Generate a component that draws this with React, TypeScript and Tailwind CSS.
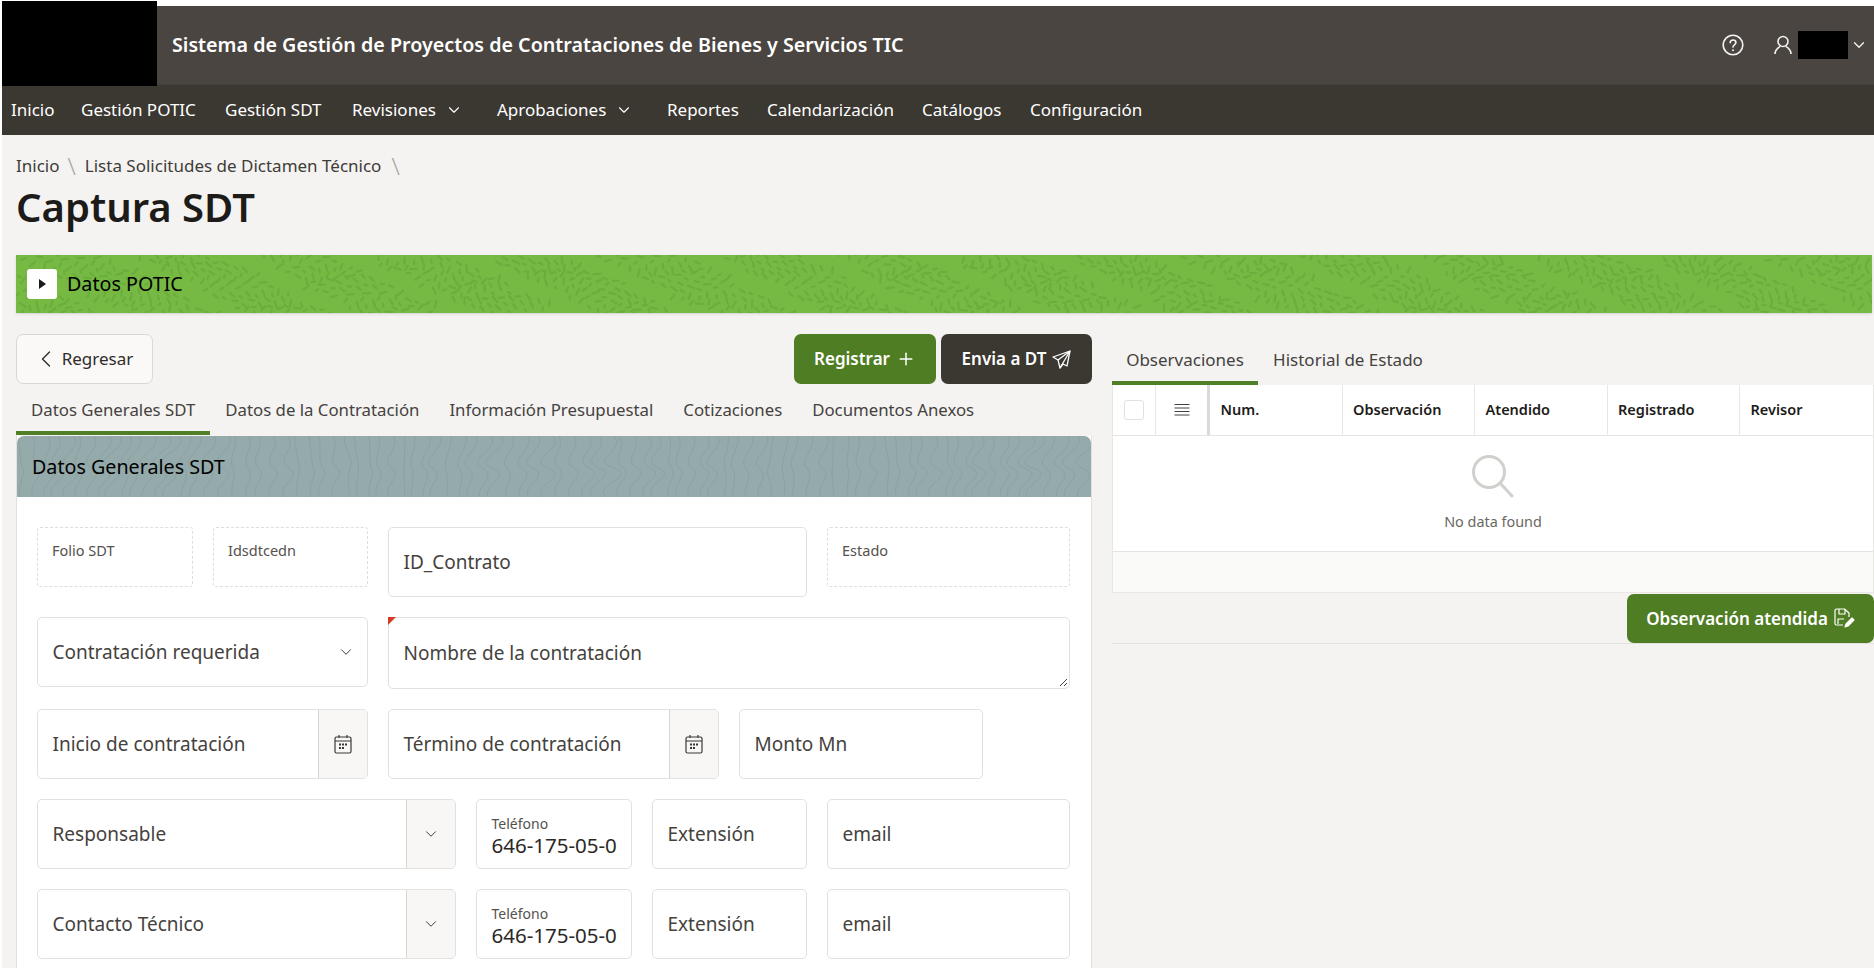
import { ChevronDown, ChevronLeft, Plus } from "lucide-react";

const font = "font-['Noto_Sans',sans-serif]";

// deterministic scatter of short dashes for the green banner texture
const dashes = Array.from({ length: 1300 }, (_, i) => {
  const x = (i * 73.13) % 1860;
  const y = (i * 37.71) % 60;
  const zone = Math.sin(x / 45) + Math.cos(y / 11 + x / 90);
  const a = zone * 1.7 + ((i * 13) % 7) / 6;
  const len = 3 + ((i * 7) % 5);
  return {
    x1: x,
    y1: y,
    x2: x + Math.cos(a) * len,
    y2: y + Math.sin(a) * len,
  };
});

const GreenTexture = () => (
  <svg className="absolute inset-0 h-full w-full" aria-hidden="true">
    {dashes.map((d, i) => (
      <line key={i} x1={d.x1} y1={d.y1} x2={d.x2} y2={d.y2} stroke="#6bae3e" strokeWidth="2.2" strokeLinecap="round" />
    ))}
  </svg>
);

const contours = Array.from({ length: 90 }, (_, i) => {
  const x = i * 12 + ((i * 7) % 5);
  const s = 4 + ((i * 11) % 9) * 2 + 8 * Math.sin(i / 6);
  const t = 6 * Math.cos(i / 4);
  return `M${x} -4 C${x + s} 12 ${x - s + t} 22 ${x + t} 32 S${x - s} 50 ${x + t} 66`;
});

const ContourTexture = () => (
  <svg className="absolute inset-0 h-full w-full" aria-hidden="true">
    {contours.map((d, i) => (
      <path key={i} d={d} fill="none" stroke="#8ca2a2" strokeWidth="1" />
    ))}
  </svg>
);

const CalendarIcon = () => (
  <svg width="18" height="20" viewBox="0 0 18 20" fill="none" stroke="#3b3834" strokeWidth="1.2">
    <rect x="1" y="3" width="16" height="16" rx="1.5" />
    <path d="M1 7h16M5 1v3M13 1v3" />
    <path d="M5 10.5h2M8 10.5h2M11 10.5h2M5 14h2M8 14h2" strokeWidth="2" />
  </svg>
);

const HelpIcon = () => (
  <svg width="22" height="22" viewBox="0 0 22 22" fill="none" stroke="#f3f2ef" strokeWidth="1.6" strokeLinecap="round">
    <circle cx="11" cy="11" r="9.8" />
    <path d="M8.2 8.8c0-1.7 1.2-2.8 2.9-2.8s2.8 1 2.8 2.5c0 2.3-2.9 2.4-2.9 4.6" />
    <path d="M11 16.2v.1" strokeWidth="2" />
  </svg>
);

const UserIcon = () => (
  <svg width="18" height="20" viewBox="0 0 18 20" fill="none" stroke="#f3f2ef" strokeWidth="1.6">
    <circle cx="9" cy="6.5" r="5" />
    <path d="M1 19c0-3.5 2.5-6 5.2-7.6M17 19c0-3.500-2.500-6-5.200-7.600" />
  </svg>
);

const PlaneIcon = () => (
  <svg width="19" height="19" viewBox="0 0 19 19" fill="none" stroke="#fff" strokeWidth="1.3" strokeLinejoin="round">
    <path d="M18 1 1 7l5 3 2 8 3-4 4 2z" />
    <path d="M18 1 6 10M18 1 8 18" />
  </svg>
);

const SaveEditIcon = () => (
  <svg width="21" height="21" viewBox="0 0 21 21" fill="none" stroke="#fff" strokeWidth="1.2" strokeLinejoin="round">
    <path d="M9 17H2.500A1.500 1.500 0 0 1 1 15.500v-13A1.500 1.500 0 0 1 2.500 1h8L15 5v4" />
    <path d="M5 1v5h6V1M4 16v-5h6" />
    <path d="m11 19 1-3 6-6 2 2-6 6z" fill="#fff" />
  </svg>
);

const MenuLinesIcon = () => (
  <svg width="16" height="14" viewBox="0 0 16 14" fill="none" stroke="#45423e" strokeWidth="1">
    <path d="M.5 1.500h15M.5 5h15M.5 8.500h15M.5 12h15" />
  </svg>
);

const navItems = [
  { label: "Inicio", w: "w-[70px]" },
  { label: "Gestión POTIC", w: "w-[144px]" },
  { label: "Gestión SDT", w: "w-[127px]" },
  { label: "Revisiones", w: "w-[145px]", caret: true },
  { label: "Aprobaciones", w: "w-[170px]", caret: true },
  { label: "Reportes", w: "w-[100px]" },
  { label: "Calendarización", w: "w-[155px]" },
  { label: "Catálogos", w: "w-[108px]" },
  { label: "Configuración", w: "w-[130px]" },
];

const tabs = ["Datos Generales SDT", "Datos de la Contratación", "Información Presupuestal", "Cotizaciones", "Documentos Anexos"];

const boxClass = "rounded-[5px] border border-[#e3e1dd] bg-white";
const inputText = "text-[19px] text-[#45423e]";

const Field = ({ label, className }: { label: string; className: string }) => (
  <div className={`${boxClass} ${inputText} flex h-[70px] items-center px-[14.500px] ${className}`}>{label}</div>
);

const ReadOnly = ({ label, className }: { label: string; className: string }) => (
  <div className={`h-[60px] rounded-[3px] border border-dashed border-[#e0deda] bg-white px-[14px] pt-[12px] text-[14.500px] text-[#55514c] ${className}`}>
    {label}
  </div>
);

const AddonField = ({ label, className, addon }: { label: string; className: string; addon: "cal" | "down" }) => (
  <div className={`${boxClass} flex h-[70px] overflow-hidden ${className}`}>
    <div className={`${inputText} flex flex-1 items-center px-[14.500px] whitespace-nowrap`}>{label}</div>
    <div className="flex w-[49px] items-center justify-center border-l border-[#d9d6d2] bg-[#f8f7f5]">
      {addon === "cal" ? <CalendarIcon /> : <ChevronDown size={18} strokeWidth={1.3} color="#3b3834" />}
    </div>
  </div>
);

const PhoneField = () => (
  <div className={`${boxClass} h-[70px] w-[156px] px-[14.500px] pt-[15px]`}>
    <div className="text-[14px] leading-[18px] text-[#55514c]">Teléfono</div>
    <div className="text-[20.500px] leading-[24px] whitespace-nowrap text-[#2b2926]">646-175-05-0</div>
  </div>
);

const ContactRow = ({ label }: { label: string }) => (
  <div className="flex gap-[20px]">
    <AddonField label={label} addon="down" className="w-[419px]" />
    <PhoneField />
    <Field label="Extensión" className="w-[155px]" />
    <Field label="email" className="w-[243px]" />
  </div>
);

const columns = ["Num.", "Observación", "Atendido", "Registrado", "Revisor"];

export default function App() {
  return (
    <div className={`${font} relative h-[968px] w-[1874px] overflow-hidden bg-white pt-[6px] pl-[2px]`}>
      {/* redacted logo */}
      <div className="absolute top-[1px] left-[2px] z-10 h-[85px] w-[155px] bg-black" />

      <header className="flex h-[79px] items-center justify-between border-b border-[#45403b] bg-[#4a4540] pr-[6px] pl-[170px]">
        <div className="text-[19.700px] font-semibold whitespace-nowrap text-white">
          Sistema de Gestión de Proyectos de Contrataciones de Bienes y Servicios TIC
        </div>
        <div className="flex items-center">
          <HelpIcon />
          <div className="ml-[30px]"><UserIcon /></div>
          <div className="ml-[6px] h-[28px] w-[50px] bg-black" />
          <ChevronDown size={18} strokeWidth={1.8} color="#f3f2ef" className="ml-[2px]" />
        </div>
      </header>

      <nav className="flex h-[50px] items-center bg-[#3b3731] pl-[9px] text-[17px] text-white">
        {navItems.map((item) => (
          <div key={item.label} className={`flex items-center whitespace-nowrap ${item.w}`}>
            {item.label}
            {item.caret && <ChevronDown size={18} strokeWidth={1.5} className="ml-[9px]" />}
          </div>
        ))}
      </nav>

      <main className="h-[833px] bg-[#f4f3f1] pl-[14px]">
        <div className="flex h-[50px] items-center pt-[11px] text-[17px] text-[#3f3c38]">
          <span>Inicio</span>
          <span className="mr-[9px] ml-[8px] text-[24px] font-light text-[#a9a6a1]">\</span>
          <span>Lista Solicitudes de Dictamen Técnico</span>
          <span className="ml-[10px] text-[24px] font-light text-[#a9a6a1]">\</span>
        </div>
        <h1 className="h-[70px] text-[40px] leading-[44px] font-semibold text-[#1d1b19]">Captura SDT</h1>

        <div className="relative mr-[2px] flex h-[58px] items-center overflow-hidden bg-[#76b943] pl-[11px] shadow-sm">
          <GreenTexture />
          <div className="relative flex h-[30px] w-[30px] items-center justify-center rounded-[3px] bg-white">
            <div className="h-0 w-0 border-y-[5px] border-l-[7px] border-y-transparent border-l-[#1d1b19]" />
          </div>
          <span className="relative ml-[10px] text-[19.700px] text-black">Datos POTIC</span>
        </div>

        <div className="mt-[21px] flex gap-[20px]">
          {/* left column */}
          <div className="w-[1076px] shrink-0">
            <div className="flex h-[50px] items-stretch justify-between">
              <button className="flex w-[137px] items-center justify-center gap-[2px] rounded-[7px] border border-[#dbd8d4] bg-[#faf9f8] pr-[4px] text-[17px] text-[#2f2c29]">
                <ChevronLeft size={28} strokeWidth={1.2} />
                Regresar
              </button>
              <div className="flex gap-[5px]">
                <button className="flex w-[142px] items-center justify-center gap-[6px] rounded-[7px] bg-[#4f7d23] text-[17px] font-semibold text-white">
                  Registrar
                  <Plus size={20} strokeWidth={1.8} />
                </button>
                <button className="flex w-[151px] items-center justify-center gap-[6px] rounded-[7px] bg-[#3b3731] text-[17px] font-semibold text-white">
                  Envia a DT
                  <PlaneIcon />
                </button>
              </div>
            </div>

            <div className="mt-[5px] flex h-[46px] text-[16.800px] text-[#45423e]">
              {tabs.map((tab, i) => (
                <div
                  key={tab}
                  className={`flex items-center px-[15px] whitespace-nowrap ${i === 0 ? "border-b-4 border-[#4f7f26]" : "pb-[4px]"}`}
                >
                  {tab}
                </div>
              ))}
            </div>

            <section className="mt-[1px] border-x border-[#e3e1dd] bg-white pb-[40px]">
              <div className="relative flex h-[61px] items-center overflow-hidden rounded-t-[7px] bg-[#95aaaa] pl-[15px]">
                <ContourTexture />
                <span className="relative text-[19.700px] text-black">Datos Generales SDT</span>
              </div>

              <div className="flex flex-col gap-[20px] px-[20px] pt-[30px]">
                <div className="flex h-[70px] items-start gap-[20px]">
                  <ReadOnly label="Folio SDT" className="w-[156px]" />
                  <ReadOnly label="Idsdtcedn" className="w-[155px]" />
                  <Field label="ID_Contrato" className="w-[419px]" />
                  <ReadOnly label="Estado" className="w-[243px]" />
                </div>

                <div className="flex items-start gap-[20px]">
                  <div className={`${boxClass} ${inputText} flex h-[70px] w-[331px] items-center justify-between pr-[12px] pl-[14.500px]`}>
                    Contratación requerida
                    <ChevronDown size={18} strokeWidth={1.3} color="#3b3834" />
                  </div>
                  <div className={`${boxClass} ${inputText} relative flex h-[72px] w-[682px] items-center px-[14.500px]`}>
                    Nombre de la contratación
                    <div className="absolute -top-px -left-px h-0 w-0 border-t-[8px] border-r-[8px] border-t-[#d63b25] border-r-transparent" />
                    <svg className="absolute right-[1px] bottom-[1px]" width="10" height="10" viewBox="0 0 10 10" stroke="#45423e" strokeWidth="1">
                      <path d="M9 2 2 9M9 6 6 9" />
                    </svg>
                  </div>
                </div>

                <div className="flex gap-[20px]">
                  <AddonField label="Inicio de contratación" addon="cal" className="w-[331px]" />
                  <AddonField label="Término de contratación" addon="cal" className="w-[331px]" />
                  <Field label="Monto Mn" className="w-[244px]" />
                </div>

                <ContactRow label="Responsable" />
                <ContactRow label="Contacto Técnico" />
              </div>
            </section>
          </div>

          {/* right column */}
          <div className="mt-[5px] flex-1">
            <div className="flex h-[46px] text-[17px] text-[#45423e]">
              <div className="flex w-[146px] items-center justify-center border-b-4 border-[#4f7f26]">Observaciones</div>
              <div className="flex w-[180px] items-center justify-center pb-[4px]">Historial de Estado</div>
            </div>

            <div className="border border-t-0 border-[#e9e7e4] bg-white">
              <div className="flex h-[51px] border-b border-[#e6e4e1] text-[14.500px] font-semibold text-[#1d1b19]">
                <div className="flex w-[43px] items-center justify-center border-r border-[#e9e7e4]">
                  <div className="h-[20px] w-[20px] rounded-[3px] border border-[#e3e1dd]" />
                </div>
                <div className="flex w-[54px] items-center justify-center border-r-[3px] border-[#dcdad6]">
                  <MenuLinesIcon />
                </div>
                {columns.map((c) => (
                  <div key={c} className="flex w-[132.500px] items-center border-r border-[#e9e7e4] pl-[10.500px] last:border-r-0">
                    {c}
                  </div>
                ))}
              </div>
              <div className="flex h-[116px] flex-col items-center border-b border-[#e6e4e1] pt-[18px]">
                <svg width="44" height="44" viewBox="0 0 44 44" fill="none" stroke="#d2d0cd" strokeWidth="3">
                  <circle cx="18" cy="18" r="15.500" />
                  <path d="m29 29 12 13" strokeLinecap="round" />
                </svg>
                <div className="mt-[13px] text-[14.400px] text-[#6b6762]">No data found</div>
              </div>
              <div className="h-[40px] bg-[#fafaf9]" />
            </div>

            <div className="flex h-[51px] justify-end border-b border-[#e3e1dd] pt-px">
              <button className="flex w-[247px] items-center justify-center gap-[6px] rounded-[7px] bg-[#4f7d23] text-[17px] font-semibold text-white">
                Observación atendida
                <SaveEditIcon />
              </button>
            </div>
          </div>
        </div>
      </main>
    </div>
  );
}
